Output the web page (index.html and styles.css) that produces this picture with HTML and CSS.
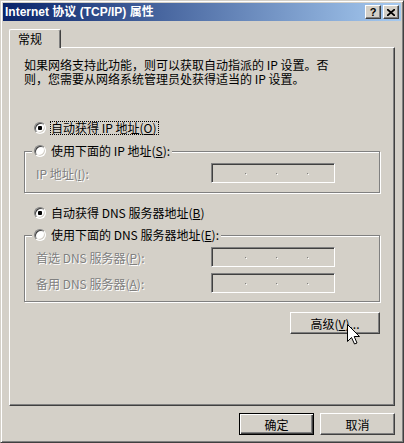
FILE: index.html
```html
<!DOCTYPE html>
<html lang="zh-CN">
<head>
    <meta charset="UTF-8">
    <title>Internet 协议 (TCP/IP) 属性</title>
    <link rel="stylesheet" href="styles.css">
</head>
<body>
<div class="window">
    <div class="titlebar">
        <span class="title">Internet 协议 (TCP/IP) 属性</span>
        <span class="tbtn help">?</span>
        <span class="tbtn close">
            <svg width="8" height="7" viewBox="0 0 8 7"><path d="M0 0 L8 7 M8 0 L0 7" stroke="#000" stroke-width="1.7" fill="none"/></svg>
        </span>
    </div>
    <div class="client">
        <div class="tabs"><span class="tab">常规</span></div>
        <div class="panel">
            <p class="intro">如果网络支持此功能，则可以获取自动指派的 IP 设置。否<br>则，您需要从网络系统管理员处获得适当的 IP 设置。</p>

            <label class="opt first"><span class="radio on"></span><span class="focus">自动获得 IP 地址(<u>O</u>)</span></label>
            <fieldset class="group">
                <legend><label class="opt"><span class="radio"></span><span>使用下面的 IP 地址(<u>S</u>):</span></label></legend>
                <div class="row"><span class="lbl">IP 地址(<u>I</u>):</span><span class="ipbox"><i></i><i></i><i></i></span></div>
            </fieldset>

            <label class="opt mid"><span class="radio on"></span><span>自动获得 DNS 服务器地址(<u>B</u>)</span></label>
            <fieldset class="group group2">
                <legend><label class="opt"><span class="radio"></span><span>使用下面的 DNS 服务器地址(<u>E</u>):</span></label></legend>
                <div class="row"><span class="lbl">首选 DNS 服务器(<u>P</u>):</span><span class="ipbox"><i></i><i></i><i></i></span></div>
                <div class="row row2"><span class="lbl">备用 DNS 服务器(<u>A</u>):</span><span class="ipbox"><i></i><i></i><i></i></span></div>
            </fieldset>

            <div class="adv"><button class="btn">高级(<u>V</u>)...</button></div>
        </div>
        <div class="actions">
            <button class="btn default">确定</button>
            <button class="btn">取消</button>
        </div>
    </div>
    <svg class="cursor" width="13" height="21" viewBox="0 0 13 21">
        <path d="M0.5 0.5 V17.5 L4.5 13.5 L7.5 20 L10 19 L7.2 12.5 H12.5 Z" fill="#fff" stroke="#000" stroke-width="1"/>
    </svg>
</div>
</body>
</html>
```

FILE: styles.css
```css
body{
    margin:0;
    background:#d4d0c8;
    font:12px "Noto Sans CJK SC", sans-serif;
    color:#000;
    text-autospace:no-autospace;
}
.window{
    position:relative;
    width:404px;
    height:443px;
    box-sizing:border-box;
    border:1px solid;
    border-color:#d4d0c8 #404040 #404040 #d4d0c8;
    box-shadow:inset 1px 1px 0 #fff, inset -1px -1px 0 #808080;
    padding:2px;
    background:#d4d0c8;
    display:flex;
    flex-direction:column;
}
.titlebar{
    height:18px;
    display:flex;
    align-items:center;
    padding:0 2px;
    background:linear-gradient(to right, #0a246a, #a6caf0);
    color:#fff;
    font:bold 12px "Liberation Sans", "Noto Sans CJK SC", sans-serif;
}
.title{
    flex:1;
    line-height:18px;
}
.tbtn{
    width:16px;
    height:14px;
    box-sizing:border-box;
    background:#d4d0c8;
    border:1px solid;
    border-color:#fff #404040 #404040 #fff;
    box-shadow:inset -1px -1px 0 #808080;
    display:flex;
    align-items:center;
    justify-content:center;
    color:#000;
}
.help{
    margin-right:2px;
    font:bold 11px "Liberation Sans", sans-serif;
}
.client{
    flex:1;
    padding:8px 6px 0;
    display:flex;
    flex-direction:column;
}
.tabs{
    display:flex;
}
.tab{
    position:relative;
    z-index:1;
    margin-bottom:-1px;
    padding:1px 18px 1px 8px;
    line-height:16px;
    background:#d4d0c8;
    border:1px solid;
    border-color:#fff #404040 transparent #fff;
    border-bottom:0;
    border-radius:2px 2px 0 0;
    box-shadow:inset -1px 0 0 #808080;
}
.panel{
    height:359px;
    box-sizing:border-box;
    border:1px solid;
    border-color:#fff #404040 #404040 #fff;
    box-shadow:inset -1px -1px 0 #808080;
    padding:10px 14px 0 14px;
}
.intro{
    margin:0;
    line-height:14px;
}
.opt{
    display:flex;
    align-items:center;
    height:16px;
    line-height:16px;
    gap:5px;
    padding-left:10px;
    white-space:nowrap;
}
.opt.first{
    margin-top:34px;
}
.opt.mid{
    margin-top:12px;
}
.radio{
    width:12px;
    height:12px;
    flex:none;
    box-sizing:border-box;
    border-radius:50%;
    border:1px solid;
    border-color:#808080 #fff #fff #808080;
    background:#fff;
    box-shadow:inset 1px 1px 0 #404040, inset -1px -1px 0 #d4d0c8;
}
.radio.on{
    background:radial-gradient(circle, #000 0 2px, #fff 2.5px);
}
.focus{
    margin-left:-1px;
    border:1px dotted #000;
    line-height:12px;
    padding-right:1px;
}
.group{
    margin:7px 0 0;
    padding:0 0 9px;
    border:1px solid #808080;
    box-shadow:1px 1px 0 #fff, inset 1px 1px 0 #fff;
    min-width:0;
}
.group2{
    margin-top:6px;
    padding-bottom:8px;
}
.group legend{
    margin-left:7px;
    padding:0 2px;
    height:16px;
    background:#d4d0c8;
}
.group legend .opt{
    padding-left:0;
}
.row{
    display:flex;
    align-items:center;
    margin:4px 0 0 11px;
}
.row2{
    margin-top:6px;
}
.lbl{
    width:175px;
    color:#808080;
    text-shadow:1px 1px 0 #fff;
}
.ipbox{
    width:124px;
    height:20px;
    box-sizing:border-box;
    border:1px solid;
    border-color:#808080 #fff #fff #808080;
    box-shadow:inset 1px 1px 0 #404040, inset -1px -1px 0 #d4d0c8;
    background:#d4d0c8;
    display:flex;
    align-items:flex-start;
    gap:30px;
    padding:9px 0 0 33px;
}
.ipbox i{
    width:1px;
    height:1px;
    background:#808080;
    box-shadow:1px 1px 0 #fff;
}
.adv{
    display:flex;
    justify-content:flex-end;
    margin-top:10px;
}
.btn{
    width:75px;
    height:22px;
    padding:0;
    font:12px "Noto Sans CJK SC", sans-serif;
    color:#000;
    background:#d4d0c8;
    border:1px solid;
    border-color:#fff #404040 #404040 #fff;
    box-shadow:inset -1px -1px 0 #808080;
    text-autospace:no-autospace;
}
.adv .btn{
    width:90px;
}
.btn.default{
    border-color:#000;
    box-shadow:inset 1px 1px 0 #fff, inset -1px -1px 0 #404040, inset -2px -2px 0 #808080;
}
.actions{
    display:flex;
    justify-content:flex-end;
    gap:6px;
    margin-top:7px;
}
.cursor{
    position:absolute;
    left:346px;
    top:323px;
}
```
